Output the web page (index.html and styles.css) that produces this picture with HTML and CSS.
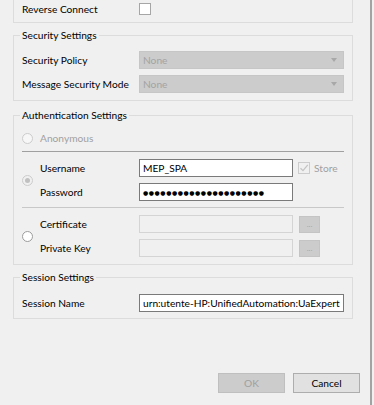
FILE: index.html
```html
<!DOCTYPE html>
<html>
<head>
<meta charset="utf-8">
<link rel="stylesheet" href="styles.css">
</head>
<body>
<div class="window">
  <div class="content">
    <div class="group top-group">
      <div class="row">
        <span class="label">Reverse Connect</span>
        <span class="checkbox"></span>
      </div>
    </div>

    <fieldset class="group sec">
      <legend>Security Settings</legend>
      <div class="row">
        <span class="label">Security Policy</span>
        <div class="combo"><span>None</span><i class="arrow"></i></div>
      </div>
      <div class="row gap">
        <span class="label">Message Security Mode</span>
        <div class="combo"><span>None</span><i class="arrow"></i></div>
      </div>
    </fieldset>

    <fieldset class="group auth">
      <legend>Authentication Settings</legend>
      <div class="opt anon">
        <span class="radio disabled"></span>
        <span class="dis">Anonymous</span>
      </div>
      <div class="sep"></div>
      <div class="opt">
        <span class="radio checked"></span>
        <div class="fields">
          <div class="row">
            <span class="label2">Username</span>
            <div class="field">MEP_SPA</div>
            <span class="checkbox disabled"><svg width="10" height="10" viewBox="0 0 10 10"><path d="M1.5 5.2 L4 7.6 L8.8 1.8" fill="none" stroke="#c4c4c4" stroke-width="1.3"/></svg></span>
            <span class="dis store">Store</span>
          </div>
          <div class="row gap">
            <span class="label2">Password</span>
            <div class="field pw">●●●●●●●●●●●●●●●●●●●●●</div>
          </div>
        </div>
      </div>
      <div class="sep light"></div>
      <div class="opt">
        <span class="radio"></span>
        <div class="fields">
          <div class="row">
            <span class="label2">Certificate</span>
            <div class="field off"></div>
            <span class="browse">...</span>
          </div>
          <div class="row gap">
            <span class="label2">Private Key</span>
            <div class="field off"></div>
            <span class="browse">...</span>
          </div>
        </div>
      </div>
    </fieldset>

    <fieldset class="group session">
      <legend>Session Settings</legend>
      <div class="row">
        <span class="label">Session Name</span>
        <div class="field wide">urn:utente-HP:UnifiedAutomation:UaExpert</div>
      </div>
    </fieldset>
  </div>

  <div class="buttons">
    <span class="btn disabled">OK</span>
    <span class="btn">Cancel</span>
  </div>
</div>
</body>
</html>
```

FILE: styles.css
```css
* { box-sizing: border-box; }
html, body {
  margin: 0;
  padding: 0;
  background: #f0f0f0;
}
body {
  font-family: "Lato", "Open Sans", sans-serif;
  font-size: 10.2px;
  color: #000;
  width: 374px;
  height: 405px;
  overflow: hidden;
}
.window {
  width: 372px;
  height: 405px;
  border-right: 2px solid #a3a3a3;
  display: flex;
  flex-direction: column;
}
.content {
  padding-left: 13px;
  width: 353px;
}
.group {
  width: 340px;
  margin: 0;
  border: 1px solid #dcdcdc;
  padding: 0 8px;
}
legend {
  padding: 0 2px;
  margin-left: -2px;
  line-height: 12px;
  height: 12px;
}
.top-group {
  border-top: none;
  height: 23px;
  padding-bottom: 4px;
}
.row {
  display: flex;
  align-items: center;
  height: 18px;
}
.row.gap { margin-top: 6px; }
.label {
  width: 117px;
  flex: none;
}
.label2 {
  width: 99px;
  flex: none;
}
.checkbox {
  width: 12px;
  height: 12px;
  border: 1px solid #a6a6a6;
  background: #fff;
  flex: none;
  display: flex;
  align-items: center;
  justify-content: center;
}
.checkbox.disabled {
  border-color: #cccccc;
  background: #f0f0f0;
  margin-left: 5px;
}
.store { margin-left: 4px; }
.dis { color: #a0a0a0; }

.sec { margin-top: 6px; padding-top: 10px; padding-bottom: 7px; }
.combo {
  width: 205px;
  height: 18px;
  background: #cccccc;
  border: 1px solid #c6c6c6;
  color: #a3a3a3;
  display: flex;
  align-items: center;
  justify-content: space-between;
  padding: 0 6px 0 3px;
}
.arrow {
  width: 0;
  height: 0;
  border-left: 3.5px solid transparent;
  border-right: 3.5px solid transparent;
  border-top: 4px solid #a8a8a8;
}

.auth { margin-top: 8px; padding-top: 8px; padding-bottom: 7px; }
.opt {
  display: flex;
  align-items: center;
}
.anon { height: 18px; }
.radio {
  width: 11px;
  height: 11px;
  border-radius: 50%;
  border: 1px solid #9c9c9c;
  background: #fff;
  flex: none;
  margin-right: 7px;
  display: flex;
  align-items: center;
  justify-content: center;
}
.radio.disabled {
  border-color: #cccccc;
  background: #f7f7f7;
}
.radio.checked {
  border-color: #cccccc;
  background: #f0f0f0;
}
.radio.checked::after {
  content: "";
  width: 5px;
  height: 5px;
  border-radius: 50%;
  background: #c0c0c0;
}
.sep {
  height: 1px;
  background: #a0a0a0;
  margin: 4px 0 7px;
}
.sep.light {
  background: #c8c8c8;
  margin: 6px 0 7px;
}
.fields { flex: 1; }
.field {
  width: 154px;
  height: 18px;
  border: 1px solid #7a7a7a;
  background: #fff;
  padding: 0 3px;
  display: flex;
  align-items: center;
  white-space: nowrap;
  overflow: hidden;
  flex: none;
}
.field.off {
  border-color: #d4d4d4;
  background: #f0f0f0;
}
.field.pw {
  font-family: "DejaVu Sans", sans-serif;
  font-size: 6px;
  letter-spacing: 0.55px;
}
.field.wide { width: 205px; }
.browse {
  width: 21px;
  height: 17px;
  margin-left: 6px;
  background: #cccccc;
  border: 1px solid #c4c4c4;
  color: #a8a8a8;
  font-size: 8px;
  display: flex;
  align-items: center;
  justify-content: center;
  line-height: 1;
}

.session { margin-top: 6px; padding-top: 11px; padding-bottom: 6px; }

.buttons {
  display: flex;
  justify-content: flex-end;
  gap: 8px;
  padding-right: 10px;
  margin-top: 54px;
}
.btn {
  width: 67px;
  height: 20px;
  border: 1px solid #adadad;
  background: #e1e1e1;
  display: flex;
  align-items: center;
  justify-content: center;
}
.btn.disabled {
  border-color: #bfbfbf;
  background: #cccccc;
  color: #a0a0a0;
}
```
